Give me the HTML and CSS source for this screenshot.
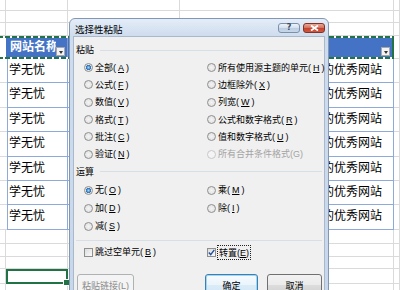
FILE: index.html
```html
<!DOCTYPE html>
<html lang="zh-CN">
  <head>
    <meta charset="UTF-8" />
    <title>选择性粘贴</title>
    <link rel="stylesheet" href="styles.css">
  </head>
  <body>
    <div class="sheet">
      <div class="row r-top1">
        <div class="cell c0"></div><div class="cell c1"></div><div class="cell c2"></div><div class="cell c3"></div><div class="cell c4"></div>
      </div>
      <div class="row r-top2">
        <div class="cell c0"></div><div class="cell c1"></div><div class="cell c2"></div><div class="cell c3"></div><div class="cell c4"></div>
      </div>
      <div class="row r-top3">
        <div class="cell c0"></div><div class="cell c1"></div><div class="cell c2"></div><div class="cell c3"></div><div class="cell c4"></div>
      </div>

      <div class="row r-head">
        <div class="band">
          <div class="gutter"></div>
          <div class="th th-a"><span class="th-text">网站名称</span><i class="dd"></i></div>
          <div class="th th-b"><span class="th-text"></span><i class="dd"></i></div>
        </div>
        <div class="cell c4"></div>
      </div>

      <div class="row r-data"><div class="cell c0w"></div><div class="td td-a">学无忧</div><div class="td td-b">学无忧是一个分享办公软件技巧的优秀网站</div><div class="cell c4"></div></div>
      <div class="row r-data"><div class="cell c0w"></div><div class="td td-a">学无忧</div><div class="td td-b">学无忧是一个分享办公软件技巧的优秀网站</div><div class="cell c4"></div></div>
      <div class="row r-data"><div class="cell c0w"></div><div class="td td-a">学无忧</div><div class="td td-b">学无忧是一个分享办公软件技巧的优秀网站</div><div class="cell c4"></div></div>
      <div class="row r-data"><div class="cell c0w"></div><div class="td td-a">学无忧</div><div class="td td-b">学无忧是一个分享办公软件技巧的优秀网站</div><div class="cell c4"></div></div>
      <div class="row r-data"><div class="cell c0w"></div><div class="td td-a">学无忧</div><div class="td td-b">学无忧是一个分享办公软件技巧的优秀网站</div><div class="cell c4"></div></div>
      <div class="row r-data"><div class="cell c0w"></div><div class="td td-a">学无忧</div><div class="td td-b">学无忧是一个分享办公软件技巧的优秀网站</div><div class="cell c4"></div></div>
      <div class="row r-data"><div class="cell c0w"></div><div class="td td-a">学无忧</div><div class="td td-b">学无忧是一个分享办公软件技巧的优秀网站</div><div class="cell c4"></div></div>

      <div class="row r-low1">
        <div class="cell c0"></div><div class="cell c1"></div><div class="cell c2"></div><div class="cell c3"></div><div class="cell c4"></div>
      </div>
      <div class="row r-low2">
        <div class="cell c0"></div><div class="cell c1"></div><div class="cell c2"></div><div class="cell c3"></div><div class="cell c4"></div>
      </div>
      <div class="row r-low3">
        <div class="cell c0"></div><div class="cell c1"></div><div class="cell c2"></div><div class="cell c3"></div><div class="cell c4"></div>
      </div>
      <div class="row r-sel">
        <div class="cell c0"></div><div class="selected"></div><div class="cell c2"></div><div class="cell c3"></div><div class="cell c4"></div>
      </div>
      <div class="row r-low3">
        <div class="cell c0"></div><div class="cell c1"></div><div class="cell c2"></div><div class="cell c3"></div><div class="cell c4"></div>
      </div>
    </div>

    <div class="dialog">
      <div class="titlebar">
        <span class="title">选择性粘贴</span>
        <div class="caps">
          <span class="cap help">?</span>
          <span class="cap close">
            <svg width="9" height="6" viewBox="0 0 9 6"><path d="M1 0.5 L8 5.5 M8 0.5 L1 5.5" stroke="#fff" stroke-width="1.8" fill="none"/></svg>
          </span>
        </div>
      </div>

      <div class="panel">
        <div class="group-title">粘贴</div>
        <div class="opts paste">
          <span class="opt"><i class="radio on"></i>全部(<u>A</u>)</span>
          <span class="opt"><i class="radio"></i>所有使用源主题的单元(<u>H</u>)</span>
          <span class="opt"><i class="radio"></i>公式(<u>F</u>)</span>
          <span class="opt"><i class="radio"></i>边框除外(<u>X</u>)</span>
          <span class="opt"><i class="radio"></i>数值(<u>V</u>)</span>
          <span class="opt"><i class="radio"></i>列宽(<u>W</u>)</span>
          <span class="opt"><i class="radio"></i>格式(<u>T</u>)</span>
          <span class="opt"><i class="radio"></i>公式和数字格式(<u>R</u>)</span>
          <span class="opt"><i class="radio"></i>批注(<u>C</u>)</span>
          <span class="opt"><i class="radio"></i>值和数字格式(<u>U</u>)</span>
          <span class="opt"><i class="radio"></i>验证(<u>N</u>)</span>
          <span class="opt disabled"><i class="radio"></i>所有合并条件格式(G)</span>
        </div>

        <div class="group-title ops-title">运算</div>
        <div class="opts ops">
          <span class="opt"><i class="radio on"></i>无(<u>O</u>)</span>
          <span class="opt"><i class="radio"></i>乘(<u>M</u>)</span>
          <span class="opt"><i class="radio"></i>加(<u>D</u>)</span>
          <span class="opt"><i class="radio"></i>除(<u>I</u>)</span>
          <span class="opt"><i class="radio"></i>减(<u>S</u>)</span>
        </div>

        <div class="sep"></div>

        <div class="opts checks">
          <span class="opt"><i class="check"></i>跳过空单元(<u>B</u>)</span>
          <span class="opt">
            <i class="check on">
              <svg width="7" height="7" viewBox="0 0 7 7"><path d="M0.8 3.6 L2.7 5.6 L6.3 0.8" stroke="#22509a" stroke-width="1.4" fill="none"/></svg>
            </i>
            <span class="focus">转置(<u>E</u>)</span>
          </span>
        </div>

        <div class="actions">
          <button type="button" class="btn link-btn" disabled>粘贴链接(L)</button>
          <button type="button" class="btn ok">确定</button>
          <button type="button" class="btn cancel">取消</button>
        </div>
      </div>
    </div>
  </body>
</html>
```

FILE: styles.css
```css
/* Page */
* {
  box-sizing: border-box;
}

body {
  margin: 0;
  width: 400px;
  height: 290px;
  overflow: hidden;
  position: relative;
  background: #fff;
  font-family: "Liberation Sans", "Noto Sans CJK SC", sans-serif;
}

/* Spreadsheet behind the dialog */
.sheet {
  display: flex;
  flex-direction: column;
}

.row {
  display: flex;
  flex: none;
}

.r-top1 { height: 11px; }
.r-top2 { height: 12px; }
.r-top3 { height: 13px; }
.r-head { height: 23px; }
.r-data { height: 24.4px; }
.r-low1 { height: 14px; }
.r-low2 { height: 13px; }
.r-low3 { height: 12px; }
.r-sel { height: 15px; }

.cell {
  border-right: 1px solid #dadada;
  border-bottom: 1px solid #dadada;
}

.c0 { width: 6px; }
.c0w { width: 7px; border-right: none; }
.c1 { width: 62px; }
.c2 { width: 112px; }
.c3 { width: 214px; }
.c4 { flex: 1; }

/* copied header row with marching ants */
.band {
  width: 394px;
  display: flex;
  border-style: solid;
  border-width: 2px 2px 2px 0;
  border-image: repeating-linear-gradient(90deg, #217346 0 5px, transparent 5px 7px) 2;
}

.gutter {
  width: 6px;
}

.th {
  display: flex;
  align-items: flex-end;
  background: #4472c4;
  color: #fff;
  font-size: 12px;
  font-weight: bold;
  line-height: 19px;
  padding: 0 1px 1px 4px;
}

.th-a {
  width: 62px;
  border-right: 1px solid #7f9bd6;
}

.th-b {
  flex: 1;
}

.th-text {
  flex: 1;
  overflow: hidden;
  white-space: nowrap;
  align-self: stretch;
}

.dd {
  width: 9px;
  height: 9px;
  flex: none;
  background: #f3f3f3;
  border: 1px solid #a7a7a7;
  margin-right: 1px;
  position: relative;
}

.dd::after {
  content: "";
  position: absolute;
  left: 2px;
  top: 3px;
  border-left: 2.5px solid transparent;
  border-right: 2.5px solid transparent;
  border-top: 3px solid #333;
}

.td {
  border-bottom: 1px solid #8eaadb;
  font-size: 12px;
  line-height: 23px;
  color: #000;
  white-space: nowrap;
  overflow: hidden;
}

.td-a {
  width: 61px;
  border-left: 1px solid #8eaadb;
  border-right: 1px solid #8eaadb;
  padding-left: 1px;
}

.td-b {
  width: 326px;
  border-right: 1px solid #8eaadb;
  display: flex;
  justify-content: flex-end;
  padding-right: 11px;
}

.selected {
  width: 62px;
  border: 2px solid #217346;
  position: relative;
}

.selected::after {
  content: "";
  position: absolute;
  right: -4px;
  bottom: -4px;
  width: 5px;
  height: 5px;
  background: #217346;
  border: 1px solid #fff;
}

/* Paste special dialog */
.dialog {
  position: absolute;
  left: 69px;
  top: 18px;
  width: 260px;
  height: 290px;
  border: 1px solid #8497b0;
  border-radius: 6px 6px 0 0;
  background: linear-gradient(#e4edf8, #cedcee 17px, #c7d7eb);
  padding: 0 3px;
  font-size: 9px;
  color: #000;
}

.titlebar {
  height: 17px;
  display: flex;
  align-items: center;
  justify-content: space-between;
  padding-left: 2px;
}

.title {
  font-size: 9.5px;
  padding-top: 2px;
}

.caps {
  display: flex;
  gap: 3px;
}

.cap {
  width: 22px;
  height: 10px;
  border-radius: 3px;
  display: flex;
  align-items: center;
  justify-content: center;
}

.help {
  background: linear-gradient(#eef3fa, #d3e0ef 50%, #bccde3 50%, #c7d7ea);
  border: 1px solid #7d90aa;
  color: #3a4a5e;
  font: bold 8px "DejaVu Sans", sans-serif;
}

.close {
  background: linear-gradient(#e9a898, #d26f5d 50%, #c4402d 50%, #cf5a3f);
  border: 1px solid #833426;
}

.panel {
  height: 300px;
  background: #f0f0f0;
  border: 1px solid #a9b8cb;
  padding: 7px 2px 0;
}

.group-title {
  display: flex;
  align-items: center;
  height: 12px;
  line-height: 12px;
}

.group-title::after {
  content: "";
  flex: 1;
  height: 1px;
  background: #d5dfe5;
  margin-left: 6px;
}

.ops-title {
  margin-top: 3px;
}

.opts {
  display: grid;
  grid-template-columns: 123px 1fr;
  padding-left: 8px;
}

.paste {
  margin-top: 3px;
  grid-auto-rows: 17.3px;
}

.ops {
  margin-top: 3.5px;
  grid-auto-rows: 18px;
}

.checks {
  margin-top: 3.2px;
  grid-auto-rows: 17px;
}

.opt {
  display: flex;
  align-items: center;
  gap: 2px;
  white-space: nowrap;
  line-height: 12px;
}

.opt u {
  text-decoration-thickness: 1px;
  text-underline-offset: 1px;
}

.opt.disabled {
  color: #a3a3a3;
}

.radio {
  width: 9px;
  height: 9px;
  flex: none;
  border-radius: 50%;
  border: 1px solid #8e8f8f;
  background: radial-gradient(circle, #f4f4f4 0, #dcdcdc 100%);
}

.radio.on {
  background: radial-gradient(circle, #9ed8fa 0, #2c6cb5 2.4px, #e9e9e9 2.9px, #dcdcdc 100%);
}

.disabled .radio {
  border-color: #c8c8c8;
  background: #f4f4f4;
}

.check {
  width: 9px;
  height: 9px;
  flex: none;
  border: 1px solid #8e8f8f;
  background: linear-gradient(135deg, #dcdcdc, #fbfbfb);
  display: flex;
  align-items: center;
  justify-content: center;
}

.focus {
  border: 1px dotted #222;
  padding: 1px 1px 0;
  margin-left: -1px;
}

.sep {
  height: 1px;
  background: #d5dfe5;
  margin-top: 4.5px;
}

.actions {
  display: flex;
  margin-top: 13.5px;
  padding-left: 1px;
}

.btn {
  height: 22px;
  border: 1px solid #707070;
  border-radius: 3px;
  background: linear-gradient(#f2f2f2 0, #ebebeb 50%, #dddddd 50%, #cfcfcf 100%);
  font: 9px "Liberation Sans", "Noto Sans CJK SC", sans-serif;
  color: #000;
  padding: 0;
}

.link-btn {
  width: 57px;
  border-color: #adb2b5;
  background: #f4f4f4;
  color: #8a8a8a;
}

.ok {
  width: 53px;
  margin-left: auto;
  border-color: #3c7fb1;
  box-shadow: inset 0 0 0 1px #9fd5f5;
  background: linear-gradient(#f7fbfe, #eaf4fb 50%, #dbecf8 50%, #d1e6f5);
}

.cancel {
  width: 55px;
  margin-left: 9px;
}
```
